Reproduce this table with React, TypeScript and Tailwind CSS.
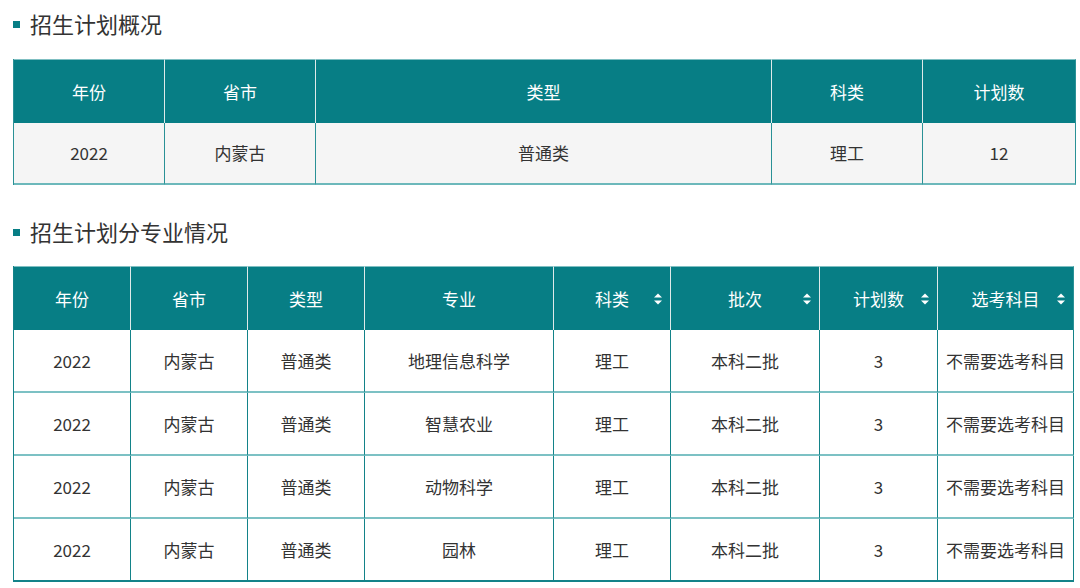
const FONT = "font-['Noto_Sans_CJK_SC','Noto_Sans',sans-serif]";

type Col = { label: string; w: string; sort?: boolean };

const overviewCols: Col[] = [
  { label: "年份", w: "w-[151px]" },
  { label: "省市", w: "w-[151px]" },
  { label: "类型", w: "w-[456px]" },
  { label: "科类", w: "w-[151px]" },
  { label: "计划数", w: "w-[153px]" },
];

const overviewRow = ["2022", "内蒙古", "普通类", "理工", "12"];

const majorCols: Col[] = [
  { label: "年份", w: "w-[117px]" },
  { label: "省市", w: "w-[117px]" },
  { label: "类型", w: "w-[117px]" },
  { label: "专业", w: "w-[189px]" },
  { label: "科类", w: "w-[117px]", sort: true },
  { label: "批次", w: "w-[149px]", sort: true },
  { label: "计划数", w: "w-[118px]", sort: true },
  { label: "选考科目", w: "w-[136px]", sort: true },
];

const majors = ["地理信息科学", "智慧农业", "动物科学", "园林"];

function SectionTitle({ children }: { children: string }) {
  return (
    <div className="flex items-center h-[50px] pb-[4px]">
      <span className="w-[7px] h-[7px] bg-[#077e85] mr-[10px] mt-[2px]" />
      <h2 className="text-[22px] text-[#333] leading-none">{children}</h2>
    </div>
  );
}

function SortIcon() {
  return (
    <svg
      className="absolute right-[7px] top-1/2 -translate-y-1/2"
      width="10"
      height="14"
      viewBox="0 0 10 14"
      fill="#ffffff"
    >
      <path d="M5 1.5 L9 5.5 L1 5.5 Z" />
      <path d="M5 12.5 L9 8.5 L1 8.5 Z" />
    </svg>
  );
}

function HeaderRow({ cols }: { cols: Col[] }) {
  return (
    <tr>
      {cols.map((c, i) => (
        <th
          key={c.label}
          className={`relative ${c.w} h-[64px] bg-[#077e85] text-white font-normal text-[17px] text-center border-t border-t-[#7fbfc2] ${
            i === cols.length - 1 ? "border-r border-r-[#2a9196]" : "border-r border-r-[#dfe9e9]"
          }`}
        >
          {c.label}
          {c.sort && <SortIcon />}
        </th>
      ))}
    </tr>
  );
}

export default function App() {
  return (
    <div className={`${FONT} bg-white w-[1080px] h-[588px] overflow-hidden pl-[13px]`}>
      <SectionTitle>招生计划概况</SectionTitle>
      <table className="mt-[9px] border-separate border-spacing-0 border-l border-l-[#2a9196] table-fixed">
        <thead>
          <HeaderRow cols={overviewCols} />
        </thead>
        <tbody>
          <tr>
            {overviewRow.map((v, i) => (
              <td
                key={i}
                className="h-[62px] bg-[#f5f5f5] text-[#333] text-[17px] text-center border-r border-r-[#2a9196] border-b-2 border-b-[#6cb8bb]"
              >
                {v}
              </td>
            ))}
          </tr>
        </tbody>
      </table>

      <div className="mt-[23px]">
        <SectionTitle>招生计划分专业情况</SectionTitle>
      </div>
      <table className="mt-[8px] border-separate border-spacing-0 border-l border-l-[#138389] table-fixed">
        <thead>
          <HeaderRow cols={majorCols} />
        </thead>
        <tbody>
          {majors.map((m, r) => {
            const last = r === majors.length - 1;
            const cells = ["2022", "内蒙古", "普通类", m, "理工", "本科二批", "3", "不需要选考科目"];
            return (
              <tr key={m}>
                {cells.map((v, i) => (
                  <td
                    key={i}
                    className={`h-[63px] bg-white text-[#333] text-[17px] text-center whitespace-nowrap border-r border-r-[#138389] border-b-2 ${
                      last ? "border-b-[#138389]" : "border-b-[#7cc1c4]"
                    }`}
                  >
                    {v}
                  </td>
                ))}
              </tr>
            );
          })}
        </tbody>
      </table>
    </div>
  );
}
